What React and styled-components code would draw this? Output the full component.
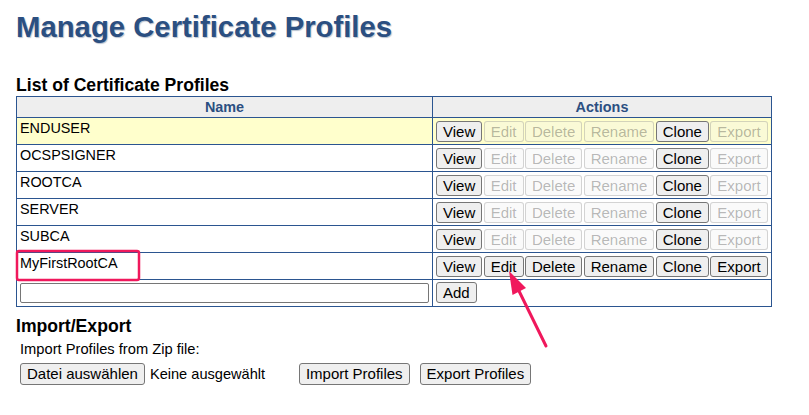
import React from 'react'
import styled, { createGlobalStyle } from 'styled-components'

const GlobalStyle = createGlobalStyle`
    html, body {
        margin: 0;
        padding: 0;
        background: #ffffff;
        font-family: "Liberation Sans", Arial, sans-serif;
        color: #000000;
    }
`

const profiles = [
    { name: "ENDUSER", fixed: true, selected: true },
    { name: "OCSPSIGNER", fixed: true },
    { name: "ROOTCA", fixed: true },
    { name: "SERVER", fixed: true },
    { name: "SUBCA", fixed: true },
    { name: "MyFirstRootCA", fixed: false },
]

const actions = ["View", "Edit", "Delete", "Rename", "Clone", "Export"]
const alwaysEnabled = ["View", "Clone"]

const App = () => {
    return (
        <>
            <GlobalStyle />
            <StyledPage>
                <StyledTitle>Manage Certificate Profiles</StyledTitle>

                <StyledSectionTitle>List of Certificate Profiles</StyledSectionTitle>
                <StyledTable>
                    <colgroup>
                        <col style={{ width: "416px" }} />
                        <col style={{ width: "339px" }} />
                    </colgroup>
                    <thead>
                        <tr>
                            <StyledHeadCell>Name</StyledHeadCell>
                            <StyledHeadCell>Actions</StyledHeadCell>
                        </tr>
                    </thead>
                    <tbody>
                        {profiles.map((profile) => (
                            <StyledRow key={profile.name} $selected={profile.selected}>
                                <StyledNameCell>{profile.name}</StyledNameCell>
                                <StyledActionCell>
                                    <StyledButtonGroup>
                                        {actions.map((action) => (
                                            <StyledButton
                                                key={action}
                                                disabled={profile.fixed && !alwaysEnabled.includes(action)}
                                            >
                                                {action}
                                            </StyledButton>
                                        ))}
                                    </StyledButtonGroup>
                                </StyledActionCell>
                            </StyledRow>
                        ))}
                        <StyledRow>
                            <StyledInputCell>
                                <StyledTextInput type="text" />
                            </StyledInputCell>
                            <StyledAddCell>
                                <StyledButton>Add</StyledButton>
                            </StyledAddCell>
                        </StyledRow>
                    </tbody>
                </StyledTable>

                <StyledImportTitle>Import/Export</StyledImportTitle>
                <StyledImportLabel>Import Profiles from Zip file:</StyledImportLabel>
                <StyledImportRow>
                    <StyledFormButton>Datei auswählen</StyledFormButton>
                    <StyledFileName>Keine ausgewählt</StyledFileName>
                    <StyledFormButton>Import Profiles</StyledFormButton>
                    <StyledFormButton>Export Profiles</StyledFormButton>
                </StyledImportRow>
            </StyledPage>

            <StyledOverlay width="809" height="415" viewBox="0 0 809 415">
                <rect x="17" y="251" width="122" height="29" rx="2" fill="none" stroke="#f0185c" strokeWidth="2.5" />
                <line x1="546" y1="346" x2="519" y2="291" stroke="#f0185c" strokeWidth="3" strokeLinecap="round" />
                <polygon points="509,271 526,288 512.5,295" fill="#f0185c" />
            </StyledOverlay>
        </>
    )
}


const StyledPage = styled.div`
    padding: 0 16px;
`

const StyledTitle = styled.h1`
    margin: 9px 0 0 0;
    font-size: 29.3px;
    line-height: 36px;
    font-weight: bold;
    color: #2b4f81;
    text-shadow: 1px 1px 1px #b9c2cf;
`

const StyledSectionTitle = styled.h3`
    margin: 30px 0 1px 0;
    font-size: 17.6px;
    line-height: 20px;
    font-weight: bold;
`

const StyledTable = styled.table`
    width: 755px;
    table-layout: fixed;
    border-collapse: collapse;
    border: 1px solid #2b5590;
    font-size: 14.4px;
`

const StyledHeadCell = styled.th`
    background: #eeeeee;
    border: 1px solid #2b5590;
    padding: 1px 4px;
    height: 20px;
    box-sizing: border-box;
    line-height: 18px;
    font-size: 14.4px;
    font-weight: bold;
    color: #2b4f81;
    text-align: center;
`

const StyledRow = styled.tr`
    background: ${(props) => (props.$selected ? "#ffffcc" : "#ffffff")};
`

const StyledNameCell = styled.td`
    border: 1px solid #2b5590;
    padding: 2px 3px 0 3px;
    vertical-align: top;
    line-height: 16px;
`

const StyledActionCell = styled.td`
    border: 1px solid #2b5590;
    padding: 3px 3px 2px 3px;
    vertical-align: top;
`

const StyledInputCell = styled.td`
    border: 1px solid #2b5590;
    padding: 3px 3px 2px 3px;
    vertical-align: top;
`

const StyledAddCell = styled.td`
    border: 1px solid #2b5590;
    padding: 2px 3px 3px 3px;
    vertical-align: top;
`

const StyledButtonGroup = styled.div`
    display: flex;
    gap: 1.4px;
`

const StyledButton = styled.button`
    height: 21px;
    padding: 0 6px;
    margin: 0;
    font-family: "Liberation Sans", Arial, sans-serif;
    font-size: 15px;
    line-height: 19px;
    color: #000000;
    background: #efefef;
    border: 1px solid #767676;
    border-radius: 3px;
    white-space: nowrap;
    &:disabled {
        color: rgba(16, 16, 16, 0.3);
        background: rgba(239, 239, 239, 0.3);
        border-color: rgba(118, 118, 118, 0.3);
    }
`

const StyledTextInput = styled.input`
    display: block;
    width: 409px;
    height: 20px;
    box-sizing: border-box;
    margin: 0;
    padding: 1px 2px;
    border: 1px solid #767676;
    border-radius: 2px;
    background: #ffffff;
    font-family: "Liberation Sans", Arial, sans-serif;
    font-size: 14px;
`

const StyledImportTitle = styled.h3`
    margin: 9px 0 0 0;
    font-size: 17.6px;
    line-height: 20px;
    font-weight: bold;
`

const StyledImportLabel = styled.div`
    margin: 5px 0 0 4px;
    font-size: 14.7px;
    line-height: 16px;
`

const StyledImportRow = styled.div`
    display: flex;
    align-items: center;
    margin: 6px 0 0 4px;
`

const StyledFormButton = styled.button`
    height: 22px;
    padding: 0 6px;
    margin: 0 10px 0 0;
    font-family: "Liberation Sans", Arial, sans-serif;
    font-size: 15px;
    line-height: 20px;
    color: #000000;
    background: #efefef;
    border: 1px solid #767676;
    border-radius: 3px;
    white-space: nowrap;
    &:first-child {
        margin-right: 5px;
    }
`

const StyledFileName = styled.span`
    width: 149px;
    font-size: 14.6px;
    line-height: 16px;
`

const StyledOverlay = styled.svg`
    position: absolute;
    top: 0;
    left: 0;
    pointer-events: none;
`


export default App
